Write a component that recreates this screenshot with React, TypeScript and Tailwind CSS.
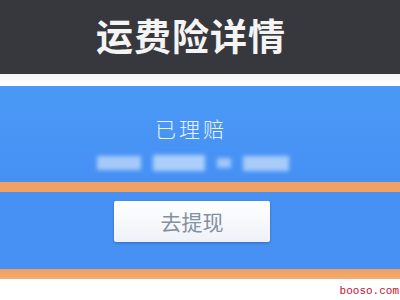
import React from "react";

const cjk = { fontFamily: '"Noto Sans CJK SC", "Noto Sans", sans-serif' };

export default function App() {
  return (
    <div className="w-[400px] h-[300px] overflow-hidden bg-white flex flex-col" style={cjk}>
      {/* Header */}
      <div className="h-[74px] bg-[#37383e] flex items-center justify-center">
        <h1 className="text-[37px] font-semibold text-[#f4f4f4] tracking-[1px] leading-none -ml-[18px] mt-[-4px]">
          运费险详情
        </h1>
      </div>
      <div className="h-[12px] bg-gradient-to-b from-[#f4f5f7] to-[#ffffff]" />

      {/* Status panel */}
      <div className="h-[96px] bg-gradient-to-b from-[#4a99f6] to-[#4690f4] flex flex-col items-center">
        <div className="mt-[32px] text-[21px] font-light text-[#eaf3ff] leading-none tracking-[3px] -ml-[18px]">
          已理赔
        </div>
        <div className="mt-[16px] flex items-center gap-[12px] blur-[2px] opacity-70 -ml-[14px]">
          <span className="w-[44px] h-[14px] bg-[#cfe2fb]" />
          <span className="w-[52px] h-[16px] bg-[#d8e8fc]" />
          <span className="w-[14px] h-[10px] bg-[#c6dcfa]" />
          <span className="w-[46px] h-[15px] bg-[#d2e4fb]" />
        </div>
      </div>

      <div className="h-[10px] bg-[#f0a163]" />

      {/* Withdraw */}
      <div className="h-[77px] bg-[#4791f5] flex items-start justify-center">
        <button className="mt-[9px] -ml-[16px] w-[156px] h-[41px] rounded-[2px] bg-gradient-to-b from-[#ffffff] to-[#eef2f7] shadow-[0_1px_3px_rgba(0,0,0,0.25)] text-[21px] text-[#8290a2] leading-none">
          去提现
        </button>
      </div>

      <div className="h-[10px] bg-gradient-to-b from-[#f09e5e] to-[#f3ac72]" />

      {/* Footer */}
      <div className="flex-1 flex items-end justify-end pr-[1px] pb-[3px]">
        <span className="text-[11px] text-[#c8102e] leading-none" style={{ fontFamily: '"Liberation Mono", monospace' }}>
          booso.com
        </span>
      </div>
    </div>
  );
}
